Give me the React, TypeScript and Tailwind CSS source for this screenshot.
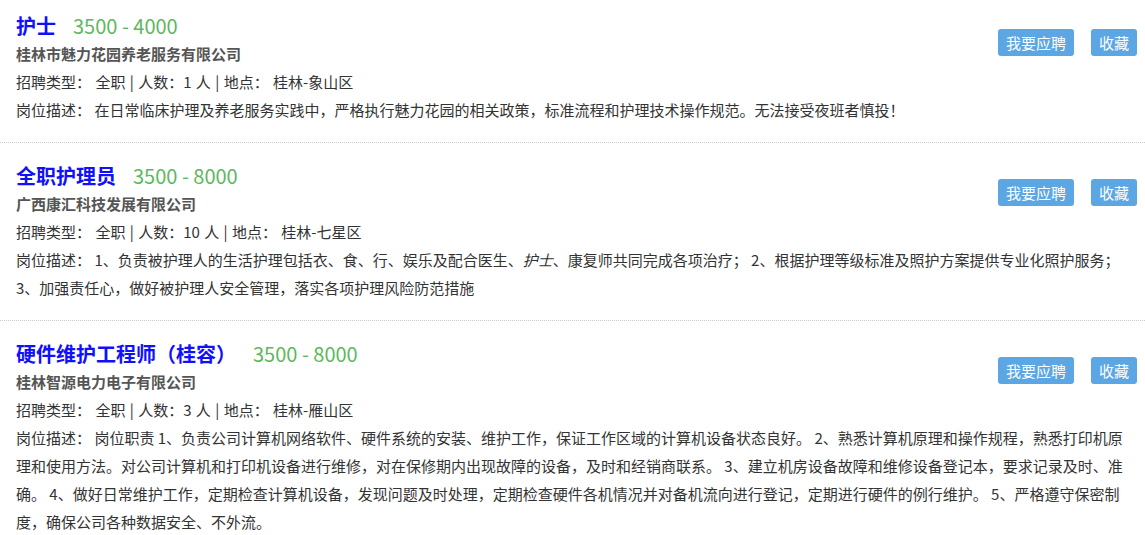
const jobs = [
  {
    title: "护士",
    salary: "3500 - 4000",
    company: "桂林市魅力花园养老服务有限公司",
    type: "全职",
    count: "1",
    place: "桂林-象山区",
    desc: <>在日常临床护理及养老服务实践中，严格执行魅力花园的相关政策，标准流程和护理技术操作规范。无法接受夜班者慎投！</>,
  },
  {
    title: "全职护理员",
    salary: "3500 - 8000",
    company: "广西康汇科技发展有限公司",
    type: "全职",
    count: "10",
    place: "桂林-七星区",
    desc: (
      <>
        1、负责被护理人的生活护理包括衣、食、行、娱乐及配合医生、<em>护士</em>、康复师共同完成各项治疗； 2、根据护理等级标准及照护方案提供专业化照护服务； 3、加强责任心，做好被护理人安全管理，落实各项护理风险防范措施
      </>
    ),
  },
  {
    title: "硬件维护工程师（桂容）",
    salary: "3500 - 8000",
    company: "桂林智源电力电子有限公司",
    type: "全职",
    count: "3",
    place: "桂林-雁山区",
    desc: (
      <>
        岗位职责 1、负责公司计算机网络软件、硬件系统的安装、维护工作，保证工作区域的计算机设备状态良好。 2、熟悉计算机原理和操作规程，熟悉打印机原理和使用方法。对公司计算机和打印机设备进行维修，对在保修期内出现故障的设备，及时和经销商联系。 3、建立机房设备故障和维修设备登记本，要求记录及时、准确。 4、做好日常维护工作，定期检查计算机设备，发现问题及时处理，定期检查硬件各机情况并对备机流向进行登记，定期进行硬件的例行维护。 5、严格遵守保密制度，确保公司各种数据安全、不外流。
      </>
    ),
  },
];

export default function App() {
  return (
    <div className="min-h-screen bg-white font-['Microsoft_YaHei','Noto_Sans_CJK_SC',sans-serif] text-[15px] leading-[28px] text-[#333]">
      <ul>
        {jobs.map((job) => (
          <li
            key={job.title}
            className="border-b border-dotted border-[#ccc] pt-[19px] pb-[18px] pl-4 pr-2 first:pt-3"
          >
            <div className="float-right mt-[17px] flex">
              <button
                type="button"
                className="rounded-[3px] bg-[#5ba6e3] px-2 text-[15px] leading-[27px] text-white"
              >
                我要应聘
              </button>
              <button
                type="button"
                className="ml-[17px] rounded-[3px] bg-[#5ba6e3] px-2 text-[15px] leading-[27px] text-white"
              >
                收藏
              </button>
            </div>
            <div className="flex items-baseline">
              <span className="text-[20px] font-bold text-[#1010ff]">{job.title}</span>
              <span className="ml-[17px] text-[20px] text-[#5cb85c]">{job.salary}</span>
            </div>
            <div className="font-bold text-[#555]">{job.company}</div>
            <div className="[word-spacing:1px]">
              招聘类型： {job.type} | 人数：{job.count} 人 | 地点： {job.place}
            </div>
            <div>岗位描述： {job.desc}</div>
          </li>
        ))}
      </ul>
    </div>
  );
}
